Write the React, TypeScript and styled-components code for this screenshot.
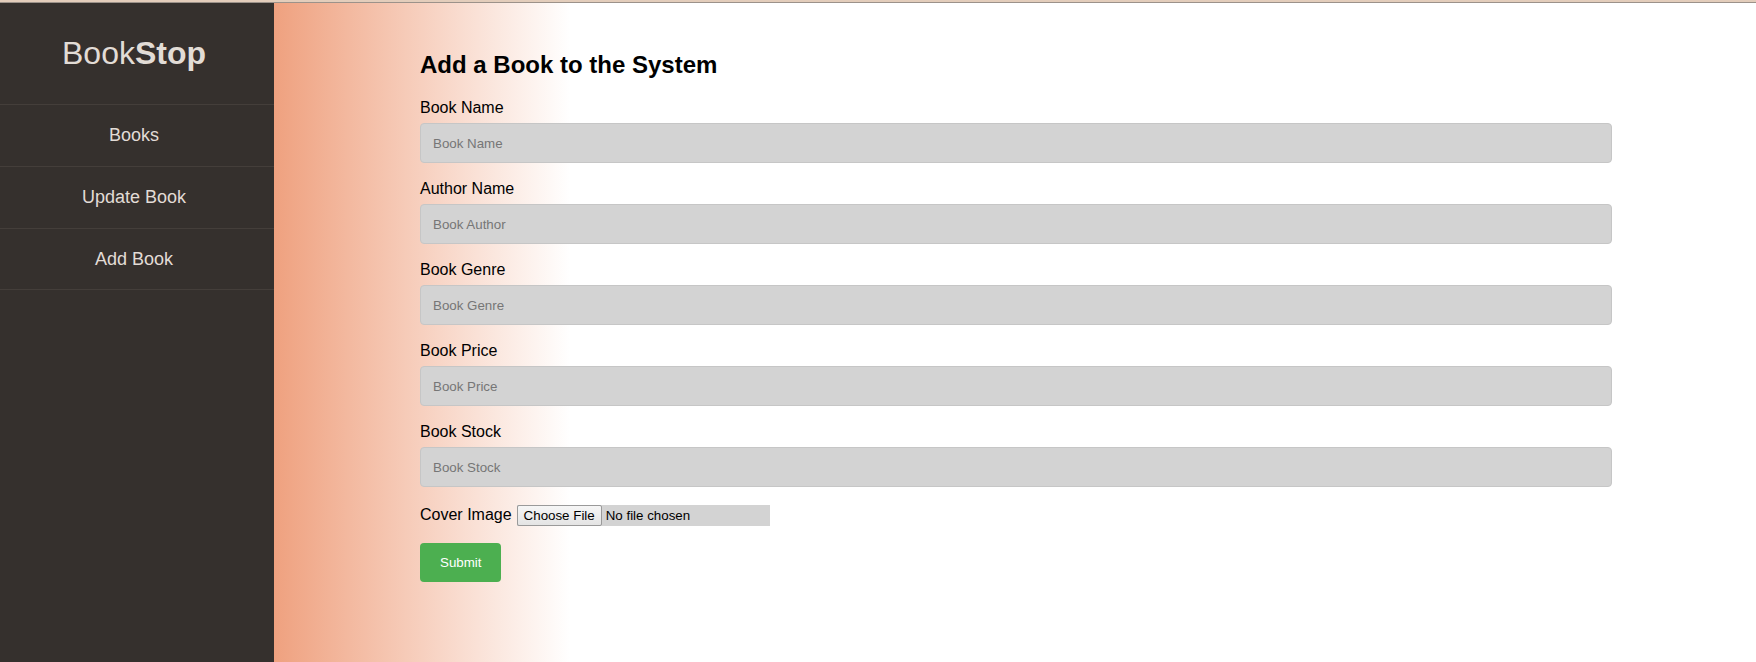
import React from "react";
import styled, { createGlobalStyle } from "styled-components";

const GlobalStyle = createGlobalStyle`
  html, body { margin: 0; padding: 0; background: #ffffff; }
  body { font-family: "Liberation Sans", Arial, sans-serif; color: #000; }
  * { box-sizing: border-box; }
`;

const Page = styled.div`
  display: flex;
  flex-direction: column;
  height: 662px;
  overflow: hidden;
`;

const TopStrip = styled.div`
  height: 3px;
  flex: none;
  background: #e3cdbb;
  border-bottom: 1px solid #9c928a;
`;

const Body = styled.div`
  flex: 1;
  display: flex;
  min-height: 0;
`;

const Sidebar = styled.nav`
  width: 274px;
  flex: none;
  background: #35302d;
  display: flex;
  flex-direction: column;
`;

const Logo = styled.div`
  height: 101px;
  display: flex;
  align-items: center;
  justify-content: center;
  font-size: 32px;
  color: #e2dcd6;
  padding-right: 6px;
  b { font-weight: 700; }
`;

const NavItem = styled.a`
  display: flex;
  align-items: center;
  justify-content: center;
  height: 62px;
  padding-right: 6px;
  border-top: 1px solid #443e3a;
  color: #e2dcd6;
  font-size: 18px;
  text-decoration: none;
  &:last-child { border-bottom: 1px solid #443e3a; }
`;

const Main = styled.main`
  flex: 1;
  background: linear-gradient(to right, #efa17f 0%, #ffffff 20%);
  padding: 48px 144px 0 146px;
`;

const Title = styled.h2`
  margin: 0 0 20px;
  font-size: 24px;
  font-weight: 700;
  line-height: 28px;
`;

const Field = styled.div`
  display: flex;
  flex-direction: column;
`;

const Label = styled.label`
  font-size: 16px;
  line-height: 18px;
`;

const TextInput = styled.input`
  width: 100%;
  height: 40px;
  margin: 6px 0 17px;
  padding: 0 12px;
  border: 1px solid #c6c6c6;
  border-radius: 4px;
  background: #d3d3d3;
  font-family: "Liberation Sans", Arial, sans-serif;
  font-size: 13.33px;
  color: #000;
  outline: none;
  &::placeholder { color: #767676; }
`;

const CoverRow = styled.div`
  display: flex;
  align-items: baseline;
  gap: 5px;
  margin-top: 1px;
  font-size: 16px;
  line-height: 18px;
`;

const FileInput = styled.input`
  width: 253px;
  height: 21px;
  background: #d3d3d3;
  font-family: "Liberation Sans", Arial, sans-serif;
  font-size: 13.33px;
  color: #000;
  &::file-selector-button {
    font: inherit;
    height: 21px;
    padding: 1px 6px;
    margin-right: 4px;
    border: 1px solid #9a9a9a;
    border-radius: 2px;
    background: linear-gradient(#f6f6f6, #e4e4e4);
    color: #000;
  }
`;

const SubmitButton = styled.button`
  display: block;
  margin-top: 17px;
  height: 39px;
  padding: 0 20px;
  border: none;
  border-radius: 4px;
  background: #4caf50;
  color: #ffffff;
  font-family: "Liberation Sans", Arial, sans-serif;
  font-size: 13.33px;
  cursor: pointer;
`;

const fields = [
  { label: "Book Name", placeholder: "Book Name" },
  { label: "Author Name", placeholder: "Book Author" },
  { label: "Book Genre", placeholder: "Book Genre" },
  { label: "Book Price", placeholder: "Book Price" },
  { label: "Book Stock", placeholder: "Book Stock" },
];

export default function App() {
  return (
    <Page>
      <GlobalStyle />
      <TopStrip />
      <Body>
        <Sidebar>
          <Logo>
            <span>
              Book<b>Stop</b>
            </span>
          </Logo>
          <div>
            <NavItem href="#">Books</NavItem>
            <NavItem href="#">Update Book</NavItem>
            <NavItem href="#">Add Book</NavItem>
          </div>
        </Sidebar>
        <Main>
          <Title>Add a Book to the System</Title>
          <form onSubmit={(e) => e.preventDefault()}>
            {fields.map((f) => (
              <Field key={f.label}>
                <Label>{f.label}</Label>
                <TextInput type="text" placeholder={f.placeholder} />
              </Field>
            ))}
            <CoverRow>
              <span>Cover Image</span>
              <FileInput type="file" />
            </CoverRow>
            <SubmitButton type="submit">Submit</SubmitButton>
          </form>
        </Main>
      </Body>
    </Page>
  );
}
